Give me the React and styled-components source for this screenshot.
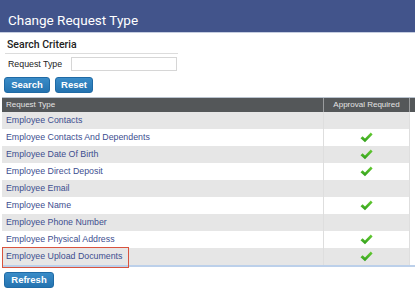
import React from "react";
import styled, { createGlobalStyle } from "styled-components";

const GlobalStyle = createGlobalStyle`
  html, body {
    margin: 0;
    padding: 0;
    background: #ffffff;
    font-family: "Liberation Sans", Arial, sans-serif;
  }
`;

const rows = [
  { name: "Employee Contacts", approval: false },
  { name: "Employee Contacts And Dependents", approval: true },
  { name: "Employee Date Of Birth", approval: true },
  { name: "Employee Direct Deposit", approval: true },
  { name: "Employee Email", approval: false },
  { name: "Employee Name", approval: true },
  { name: "Employee Phone Number", approval: false },
  { name: "Employee Physical Address", approval: true },
  { name: "Employee Upload Documents", approval: true, selected: true },
];

const Page = styled.div`
  width: 415px;
  height: 289px;
  overflow: hidden;
`;

const TitleBar = styled.div`
  height: 33px;
  background: #42548b;
  border-bottom: 1px solid #c5cde0;
  box-sizing: border-box;
  display: flex;
  align-items: flex-end;
  padding: 0 0 3px 8px;
`;

const Title = styled.h1`
  margin: 0;
  font-family: Roboto, "Open Sans", sans-serif;
  font-weight: 400;
  font-size: 13.5px;
  line-height: 17px;
  color: #ffffff;
`;

const Criteria = styled.div`
  padding: 0 0 0 5px;
`;

const SectionTitle = styled.div`
  width: 171px;
  font-family: Roboto, "Open Sans", sans-serif;
  font-size: 10.5px;
  font-weight: 500;
  color: #222;
  line-height: 14px;
  padding: 5px 0 1px 2px;
  border-bottom: 1px solid #dcdcdc;
`;

const FieldRow = styled.div`
  display: flex;
  align-items: center;
  gap: 9px;
  margin-top: 3px;
  padding-left: 3px;
`;

const Label = styled.label`
  font-size: 8.8px;
  color: #222;
  white-space: nowrap;
  flex-shrink: 0;
`;

const Input = styled.input`
  width: 106px;
  height: 14px;
  box-sizing: border-box;
  border: 1px solid #d6d6d6;
  padding: 0;
  margin: 0;
`;

const ButtonRow = styled.div`
  display: flex;
  gap: 5px;
  margin-top: 6px;
  margin-left: -1px;
`;

const Button = styled.button`
  display: block;
  height: 16px;
  width: ${(p) => p.w}px;
  padding: 0;
  border: 1px solid #1f6aa5;
  border-radius: 3px;
  background: linear-gradient(#3a8cc8, #2473b0);
  color: #ffffff;
  font-family: "Liberation Sans", Arial, sans-serif;
  font-weight: 700;
  font-size: 9.5px;
  line-height: 14px;
`;

const Table = styled.div`
  margin: 4px 0 0 2px;
  border-top: 1px solid #b9c3cf;
  border-bottom: 2px solid #bcd0ea;
  width: 413px;
`;

const HeadRow = styled.div`
  display: grid;
  grid-template-columns: 322px 86px 5px;
  height: 14px;
  background: #545759;
  color: #e4e4e4;
  font-size: 8px;
  line-height: 14px;
`;

const HeadCell = styled.div`
  padding-left: ${(p) => (p.center ? 0 : 4)}px;
  text-align: ${(p) => (p.center ? "center" : "left")};
  border-right: ${(p) => (p.last ? "none" : "1px solid #9a9c9e")};
`;

const Row = styled.div`
  display: grid;
  grid-template-columns: 322px 86px 5px;
  height: 17px;
  background: ${(p) => (p.odd ? "#e6e6e6" : "#ffffff")};
  position: relative;
`;

const NameCell = styled.div`
  font-size: 8.8px;
  line-height: 17px;
  color: #3d4e8f;
  padding-left: 4px;
  border-right: 1px solid #dedede;
`;

const CheckCell = styled.div`
  display: flex;
  align-items: center;
  justify-content: center;
  border-right: 1px solid #dedede;
`;

const Filler = styled.div`
  background: #ffffff;
`;

const Highlight = styled.div`
  position: absolute;
  left: 0;
  top: -1px;
  width: 127px;
  height: 21px;
  border: 1px solid #d9533e;
  box-sizing: border-box;
  pointer-events: none;
`;

const Footer = styled.div`
  padding: 5px 0 0 4px;
`;

function Check() {
  return (
    <svg width="13" height="11" viewBox="0 0 13 11">
      <defs>
        <linearGradient id="chk" x1="0" y1="0" x2="0" y2="1">
          <stop offset="0" stopColor="#66cc33" />
          <stop offset="1" stopColor="#2f9e1a" />
        </linearGradient>
      </defs>
      <path
        d="M0.5 6.2 L2.6 4.3 L5 6.6 L10.8 0.6 L12.6 2.4 L5 10.2 Z"
        fill="url(#chk)"
      />
    </svg>
  );
}

export default function App() {
  return (
    <Page>
      <GlobalStyle />
      <TitleBar>
        <Title>Change Request Type</Title>
      </TitleBar>
      <Criteria>
        <SectionTitle>Search Criteria</SectionTitle>
        <FieldRow>
          <Label>Request Type</Label>
          <Input type="text" />
        </FieldRow>
        <ButtonRow>
          <Button w={46}>Search</Button>
          <Button w={38}>Reset</Button>
        </ButtonRow>
      </Criteria>
      <Table>
        <HeadRow>
          <HeadCell>Request Type</HeadCell>
          <HeadCell center>Approval Required</HeadCell>
          <HeadCell last />
        </HeadRow>
        {rows.map((r, i) => (
          <Row key={r.name} odd={i % 2 === 0}>
            <NameCell>{r.name}</NameCell>
            <CheckCell>{r.approval && <Check />}</CheckCell>
            <Filler />
            {r.selected && <Highlight />}
          </Row>
        ))}
      </Table>
      <Footer>
        <Button w={50}>Refresh</Button>
      </Footer>
    </Page>
  );
}
